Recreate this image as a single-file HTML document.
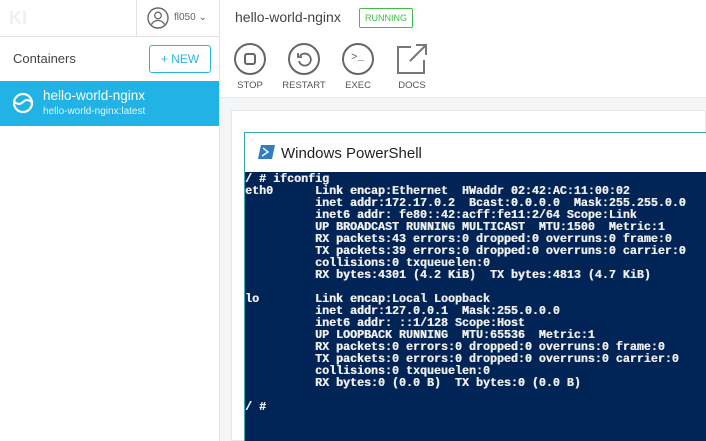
<!DOCTYPE html>
<html><head><style>
*{margin:0;padding:0;box-sizing:border-box}
body{width:706px;height:441px;overflow:hidden;background:#fff;font-family:"Liberation Sans",sans-serif;position:relative}
.abs{position:absolute}
.term{position:absolute;left:245px;top:172px;width:461px;height:269px;background:#012456;color:#eee;font-family:"Liberation Mono",monospace;font-weight:bold;font-size:11.67px;line-height:12px;white-space:pre;padding-top:1px;overflow:hidden;text-shadow:0.4px 0 0 #eee}
.btn{position:absolute;top:43px;width:32px;height:32px;border:2px solid #666;border-radius:50%}
.lbl{position:absolute;top:80px;font-size:9.5px;color:#555;text-align:center;width:50px}
</style></head><body>
<div class="abs" style="left:0;top:0;width:220px;height:441px;border-right:1px solid #e3e3e3"></div>
<div class="abs" style="left:0;top:36px;width:220px;height:1px;background:#e3e3e3"></div>
<div class="abs" style="left:136px;top:0;width:1px;height:36px;background:#e3e3e3"></div>
<div class="abs" style="left:9px;top:8px;font-size:18px;font-weight:bold;color:#eef0f3">KI</div>
<svg class="abs" style="left:146px;top:6px" width="24" height="24"><circle cx="12" cy="12" r="10" fill="none" stroke="#666" stroke-width="1.4"/><circle cx="12" cy="9.5" r="3.3" fill="none" stroke="#666" stroke-width="1.3"/><path d="M5.5 18.5c1.5-3 3.8-4 6.5-4s5 1 6.5 4" fill="none" stroke="#666" stroke-width="1.3"/></svg>
<div class="abs" style="left:174px;top:12px;font-size:10px;color:#666">fl050 ⌄</div>
<div class="abs" style="left:13px;top:51px;font-size:13px;color:#444">Containers</div>
<div class="abs" style="left:149px;top:45px;width:62px;height:28px;border:1px solid #2cb5e4;border-radius:3px;color:#2cb5e4;font-size:12px;text-align:center;line-height:26px">+ NEW</div>
<div class="abs" style="left:0;top:81px;width:219px;height:45px;background:#22b3e6"></div>
<svg class="abs" style="left:12px;top:92px" width="22" height="22"><circle cx="11" cy="11" r="9" fill="none" stroke="#fff" stroke-width="2.2"/><path d="M2.5 10c3 2.5 6 2.5 8.5 0s5.5-2.5 8.5 0" fill="none" stroke="#fff" stroke-width="2"/></svg>
<div class="abs" style="left:43px;top:88px;font-size:13.5px;color:#fff">hello-world-nginx</div>
<div class="abs" style="left:43px;top:106px;font-size:10px;color:#e0f4fc">hello-world-nginx:latest</div>
<div class="abs" style="left:235px;top:9px;font-size:14px;color:#444">hello-world-nginx</div>
<div class="abs" style="left:359px;top:8px;width:54px;height:20px;border:1px solid #3fbf4a;border-radius:2px;color:#3fbf4a;font-size:9px;text-align:center;line-height:18px">RUNNING</div>
<div class="btn" style="left:234px"><div class="abs" style="left:8px;top:8px;width:12px;height:12px;border:2px solid #666;border-radius:3px"></div></div>
<div class="btn" style="left:288px"><svg class="abs" style="left:5px;top:5px" width="18" height="18"><path d="M5 6A6 6 0 1 1 4 11" fill="none" stroke="#666" stroke-width="1.8"/><path d="M3 3v4h4" fill="none" stroke="#666" stroke-width="1.8"/></svg></div>
<div class="btn" style="left:342px"><div class="abs" style="left:7px;top:7px;font-size:11px;color:#666;font-family:'Liberation Mono'">&gt;_</div></div>
<svg class="abs" style="left:396px;top:43px" width="32" height="32"><path d="M15 4H2v26h26V17" fill="none" stroke="#777" stroke-width="2"/><path d="M14 18L30 2M20 2h10v10" fill="none" stroke="#777" stroke-width="2"/></svg>
<div class="lbl" style="left:225px">STOP</div>
<div class="lbl" style="left:279px">RESTART</div>
<div class="lbl" style="left:333px">EXEC</div>
<div class="lbl" style="left:387px">DOCS</div>
<div class="abs" style="left:220px;top:97px;width:486px;height:344px;background:#f4f5f7;border-top:1px solid #eaeaea"></div>
<div class="abs" style="left:231px;top:110px;width:475px;height:331px;background:#fff;border:1px solid #e6e6e6"></div>
<div class="abs" style="left:244px;top:132px;width:462px;height:309px;background:#fff;border:1px solid #3aa7b0;border-right:none;border-bottom:none"></div>
<svg class="abs" style="left:258px;top:145px" width="17" height="14"><path d="M3 0h14l-3 14H0z" fill="#2f7ec4"/><path d="M5 3l5 4-6 4" fill="none" stroke="#fff" stroke-width="1.4"/></svg>
<div class="abs" style="left:281px;top:145px;font-size:15px;color:#222">Windows PowerShell</div>
<div class="term">/ # ifconfig
eth0      Link encap:Ethernet  HWaddr 02:42:AC:11:00:02
          inet addr:172.17.0.2  Bcast:0.0.0.0  Mask:255.255.0.0
          inet6 addr: fe80::42:acff:fe11:2/64 Scope:Link
          UP BROADCAST RUNNING MULTICAST  MTU:1500  Metric:1
          RX packets:43 errors:0 dropped:0 overruns:0 frame:0
          TX packets:39 errors:0 dropped:0 overruns:0 carrier:0
          collisions:0 txqueuelen:0
          RX bytes:4301 (4.2 KiB)  TX bytes:4813 (4.7 KiB)

lo        Link encap:Local Loopback
          inet addr:127.0.0.1  Mask:255.0.0.0
          inet6 addr: ::1/128 Scope:Host
          UP LOOPBACK RUNNING  MTU:65536  Metric:1
          RX packets:0 errors:0 dropped:0 overruns:0 frame:0
          TX packets:0 errors:0 dropped:0 overruns:0 carrier:0
          collisions:0 txqueuelen:0
          RX bytes:0 (0.0 B)  TX bytes:0 (0.0 B)

/ #</div>
</body></html>
